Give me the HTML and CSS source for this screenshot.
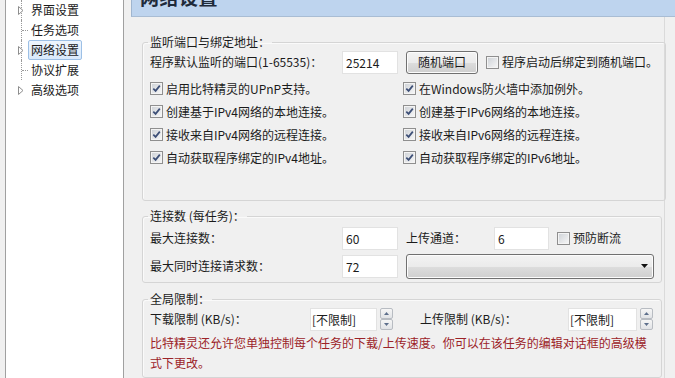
FILE: index.html
```html
<!DOCTYPE html>
<html lang="zh-CN">
<head>
    <meta charset="UTF-8">
    <meta name="viewport" content="width=device-width, initial-scale=1.0">
    <title>选项 - 网络设置</title>
    <link rel="stylesheet" href="styles.css">
</head>
<body>
    <div class="options-window">
        <div class="tree">
            <ul class="tree-list">
                <li class="tree-item">
                    <span class="tree-gutter"><svg class="tree-expander" width="6" height="9" viewBox="0 0 6 9"><path d="M0.5 0.5 L5 4.5 L0.5 8.5 Z"/></svg></span>
                    <span class="tree-label">界面设置</span>
                </li>
                <li class="tree-item">
                    <span class="tree-gutter"><span class="tree-branch"></span></span>
                    <span class="tree-label">任务选项</span>
                </li>
                <li class="tree-item">
                    <span class="tree-gutter"><svg class="tree-expander" width="6" height="9" viewBox="0 0 6 9"><path d="M0.5 0.5 L5 4.5 L0.5 8.5 Z"/></svg></span>
                    <span class="tree-label is-selected">网络设置</span>
                </li>
                <li class="tree-item">
                    <span class="tree-gutter"><span class="tree-branch"></span></span>
                    <span class="tree-label">协议扩展</span>
                </li>
                <li class="tree-item">
                    <span class="tree-gutter"><svg class="tree-expander" width="6" height="9" viewBox="0 0 6 9"><path d="M0.5 0.5 L5 4.5 L0.5 8.5 Z"/></svg></span>
                    <span class="tree-label">高级选项</span>
                </li>
            </ul>
        </div>

        <div class="page">
            <div class="page-header">
                <h1 class="page-title">网络设置</h1>
            </div>

            <div class="page-body">
                <!-- 监听端口 -->
                <fieldset class="group group-listen">
                    <legend class="group-title">监听端口与绑定地址：</legend>
                    <div class="form-row">
                        <span class="field-label label-wide">程序默认监听的端口(1-65535)：</span>
                        <input class="text-input input-num" type="text" value="25214">
                        <button class="push-button" type="button">随机端口</button>
                        <label class="check check-random"><span class="check-box"></span>程序启动后绑定到随机端口。</label>
                    </div>
                    <div class="check-grid">
                        <label class="check"><span class="check-box is-checked"><svg width="9" height="9" viewBox="0 0 9 9"><path d="M1.3 4.6 L3.6 6.9 L7.8 1.6"/></svg></span>启用比特精灵的UPnP支持。</label>
                        <label class="check"><span class="check-box is-checked"><svg width="9" height="9" viewBox="0 0 9 9"><path d="M1.3 4.6 L3.6 6.9 L7.8 1.6"/></svg></span>在Windows防火墙中添加例外。</label>
                        <label class="check"><span class="check-box is-checked"><svg width="9" height="9" viewBox="0 0 9 9"><path d="M1.3 4.6 L3.6 6.9 L7.8 1.6"/></svg></span>创建基于IPv4网络的本地连接。</label>
                        <label class="check"><span class="check-box is-checked"><svg width="9" height="9" viewBox="0 0 9 9"><path d="M1.3 4.6 L3.6 6.9 L7.8 1.6"/></svg></span>创建基于IPv6网络的本地连接。</label>
                        <label class="check"><span class="check-box is-checked"><svg width="9" height="9" viewBox="0 0 9 9"><path d="M1.3 4.6 L3.6 6.9 L7.8 1.6"/></svg></span>接收来自IPv4网络的远程连接。</label>
                        <label class="check"><span class="check-box is-checked"><svg width="9" height="9" viewBox="0 0 9 9"><path d="M1.3 4.6 L3.6 6.9 L7.8 1.6"/></svg></span>接收来自IPv6网络的远程连接。</label>
                        <label class="check"><span class="check-box is-checked"><svg width="9" height="9" viewBox="0 0 9 9"><path d="M1.3 4.6 L3.6 6.9 L7.8 1.6"/></svg></span>自动获取程序绑定的IPv4地址。</label>
                        <label class="check"><span class="check-box is-checked"><svg width="9" height="9" viewBox="0 0 9 9"><path d="M1.3 4.6 L3.6 6.9 L7.8 1.6"/></svg></span>自动获取程序绑定的IPv6地址。</label>
                    </div>
                </fieldset>

                <!-- 连接数 -->
                <fieldset class="group group-conn">
                    <legend class="group-title">连接数 (每任务)：</legend>
                    <div class="form-row">
                        <span class="field-label label-wide">最大连接数：</span>
                        <input class="text-input input-num" type="text" value="60">
                        <span class="field-label label-channel">上传通道：</span>
                        <input class="text-input input-short" type="text" value="6">
                        <label class="check check-stall"><span class="check-box"></span>预防断流</label>
                    </div>
                    <div class="form-row">
                        <span class="field-label label-wide">最大同时连接请求数：</span>
                        <input class="text-input input-num" type="text" value="72">
                        <div class="combo">
                            <svg class="combo-arrow" width="7" height="4" viewBox="0 0 7 4"><path d="M0 0 H7 L3.5 4 Z"/></svg>
                        </div>
                    </div>
                </fieldset>

                <!-- 全局限制 -->
                <fieldset class="group group-limit">
                    <legend class="group-title">全局限制：</legend>
                    <div class="form-row">
                        <span class="field-label label-down">下载限制 (KB/s)：</span>
                        <input class="text-input input-limit" type="text" value="[不限制]">
                        <span class="spinner">
                            <span class="spin-btn"><svg width="5" height="3" viewBox="0 0 5 3"><path d="M0 3 L2.5 0 L5 3 Z"/></svg></span>
                            <span class="spin-btn"><svg width="5" height="3" viewBox="0 0 5 3"><path d="M0 0 H5 L2.5 3 Z"/></svg></span>
                        </span>
                        <span class="field-label label-up">上传限制 (KB/s)：</span>
                        <input class="text-input input-limit input-limit-up" type="text" value="[不限制]">
                        <span class="spinner">
                            <span class="spin-btn"><svg width="5" height="3" viewBox="0 0 5 3"><path d="M0 3 L2.5 0 L5 3 Z"/></svg></span>
                            <span class="spin-btn"><svg width="5" height="3" viewBox="0 0 5 3"><path d="M0 0 H5 L2.5 3 Z"/></svg></span>
                        </span>
                    </div>
                    <p class="note">比特精灵还允许您单独控制每个任务的下载/上传速度。你可以在该任务的编辑对话框的高级模式下更改。</p>
                </fieldset>
            </div>
        </div>
    </div>
</body>
</html>
```

FILE: styles.css
```css
:root {
    --win-bg: #f0f0f0;
    --win-text: #1b1b1b;
    --win-border: #a0a0a0;
    --group-border: #d5d5d5;
    --header-blue: #bed4ee;
    --note-red: #9c2328;
}

* {
    margin: 0;
    padding: 0;
    box-sizing: border-box;
}

body {
    font-family: "Noto Sans CJK SC", "Microsoft YaHei", sans-serif;
    font-size: 12px;
    line-height: 16px;
    color: var(--win-text);
    background-color: var(--win-bg);
    overflow: hidden;
}

input,
button {
    font: inherit;
    color: inherit;
}

.options-window {
    display: flex;
    height: 100vh;
}

/* 左侧树 */
.tree {
    width: 119px;
    margin-left: 5px;
    background: white;
    border-left: 1px solid var(--win-border);
    border-right: 1px solid var(--win-border);
}

.tree-list {
    list-style: none;
    padding-left: 15px;
}

.tree-item {
    display: flex;
    height: 20px;
}

.tree-gutter {
    width: 7px;
    display: flex;
    align-items: center;
    border-left: 1px dotted #9a9a9a;
}

.tree-item:last-child .tree-gutter {
    border-left-color: transparent;
}

.tree-expander {
    margin-left: -4px;
    fill: white;
    stroke: #8e8e8e;
    stroke-width: 1;
}

.tree-branch {
    width: 6px;
    border-top: 1px dotted #9a9a9a;
}

.tree-label {
    height: 20px;
    line-height: 18px;
    padding: 0 2px;
    border: 1px solid transparent;
    border-radius: 2px;
    white-space: nowrap;
}

.tree-label.is-selected {
    border-color: #9dc0e6;
    background: linear-gradient(to bottom, #eef5fd, #d9e9fb);
}

/* 右侧页面 */
.page {
    flex: 1;
    display: flex;
    flex-direction: column;
    margin-left: 7px;
}

.page-header {
    height: 17px;
    padding-left: 8px;
    background-color: var(--header-blue);
    border-left: 1px solid #9fb5cf;
    border-bottom: 1px solid #a9bdd4;
}

.page-title {
    margin-top: -13px;
    font-size: 19px;
    line-height: 19px;
    font-weight: bold;
    color: #1e2a3a;
    letter-spacing: 0.5px;
}

.page-body {
    width: 534px;
    flex: 1;
    padding: 0 2px 0 11px;
    border-right: 1px solid #dadada;
}

.group {
    width: 520px;
    margin-top: 8px;
    padding: 0 7px 4px;
    border: 1px solid var(--group-border);
    border-radius: 3px;
    box-shadow: inset 1px 1px 0 #fafafa;
}

.group-listen {
    margin-top: 17px;
    padding-bottom: 31px;
}

.group-conn {
    margin-top: 7px;
}

.group-title {
    line-height: 16px;
    padding: 0 2px;
    margin-left: -2px;
}

.form-row {
    display: flex;
    align-items: center;
    height: 24px;
    white-space: nowrap;
}

.group-conn .form-row {
    margin-top: 2px;
}

.group-conn .form-row + .form-row {
    margin-top: 4px;
}

.field-label {
    flex: none;
}

.label-wide {
    width: 192px;
}

.label-channel {
    width: 88px;
    margin-left: 8px;
}

.label-down {
    width: 160px;
}

.label-up {
    width: 148px;
    margin-left: 27px;
}

.text-input {
    height: 23px;
    padding: 0 3px;
    background: white;
    border: 1px solid #e2e2e2;
    outline: none;
}

.input-num {
    width: 56px;
}

.input-short {
    width: 55px;
}

.input-limit {
    width: 67px;
    padding: 0 1px;
}

.input-limit-up {
    width: 69px;
}

.push-button {
    width: 72px;
    height: 23px;
    margin-left: 8px;
    border: 1px solid #707070;
    border-radius: 3px;
    background: linear-gradient(to bottom, #f3f3f3 0%, #ebebeb 50%, #dddddd 51%, #cfcfcf 100%);
    box-shadow: inset 0 0 0 1px #fcfcfc;
}

/* 复选框 */
.check {
    display: flex;
    align-items: center;
    gap: 3px;
    white-space: nowrap;
}

.check-random,
.check-stall {
    margin-left: 8px;
}

.check-box {
    width: 13px;
    height: 13px;
    display: flex;
    align-items: center;
    justify-content: center;
    border: 1px solid #8f8f8f;
    background: linear-gradient(135deg, #cdd1d6, #f8f8f8);
    box-shadow: inset 0 0 0 1px #f4f4f4;
}

.check-box svg {
    fill: none;
    stroke: #3d4f77;
    stroke-width: 1.7;
}

.check-grid {
    display: grid;
    grid-template-columns: 253px auto;
    grid-auto-rows: 23px;
    align-items: center;
    margin-top: 3px;
}

/* 下拉框 */
.combo {
    width: 248px;
    height: 25px;
    margin-left: 8px;
    display: flex;
    align-items: center;
    justify-content: flex-end;
    padding-right: 5px;
    border: 1px solid #707070;
    border-radius: 3px;
    background: linear-gradient(to bottom, #f3f3f3 0%, #ebebeb 50%, #dddddd 51%, #cfcfcf 100%);
    box-shadow: inset 0 0 0 1px #fcfcfc;
}

.combo-arrow {
    fill: #111;
}

/* 数字微调 */
.spinner {
    display: flex;
    flex-direction: column;
    margin-left: 3px;
}

.spin-btn {
    width: 13px;
    height: 11px;
    display: flex;
    align-items: center;
    justify-content: center;
    border: 1px solid #b8bcc2;
    border-radius: 2px;
    background: linear-gradient(to bottom, #f6f6f6, #e1e3e6);
}

.spin-btn svg {
    fill: #5d6f8c;
}

.note {
    width: 497px;
    margin-top: 2px;
    line-height: 20px;
    color: var(--note-red);
}
```
